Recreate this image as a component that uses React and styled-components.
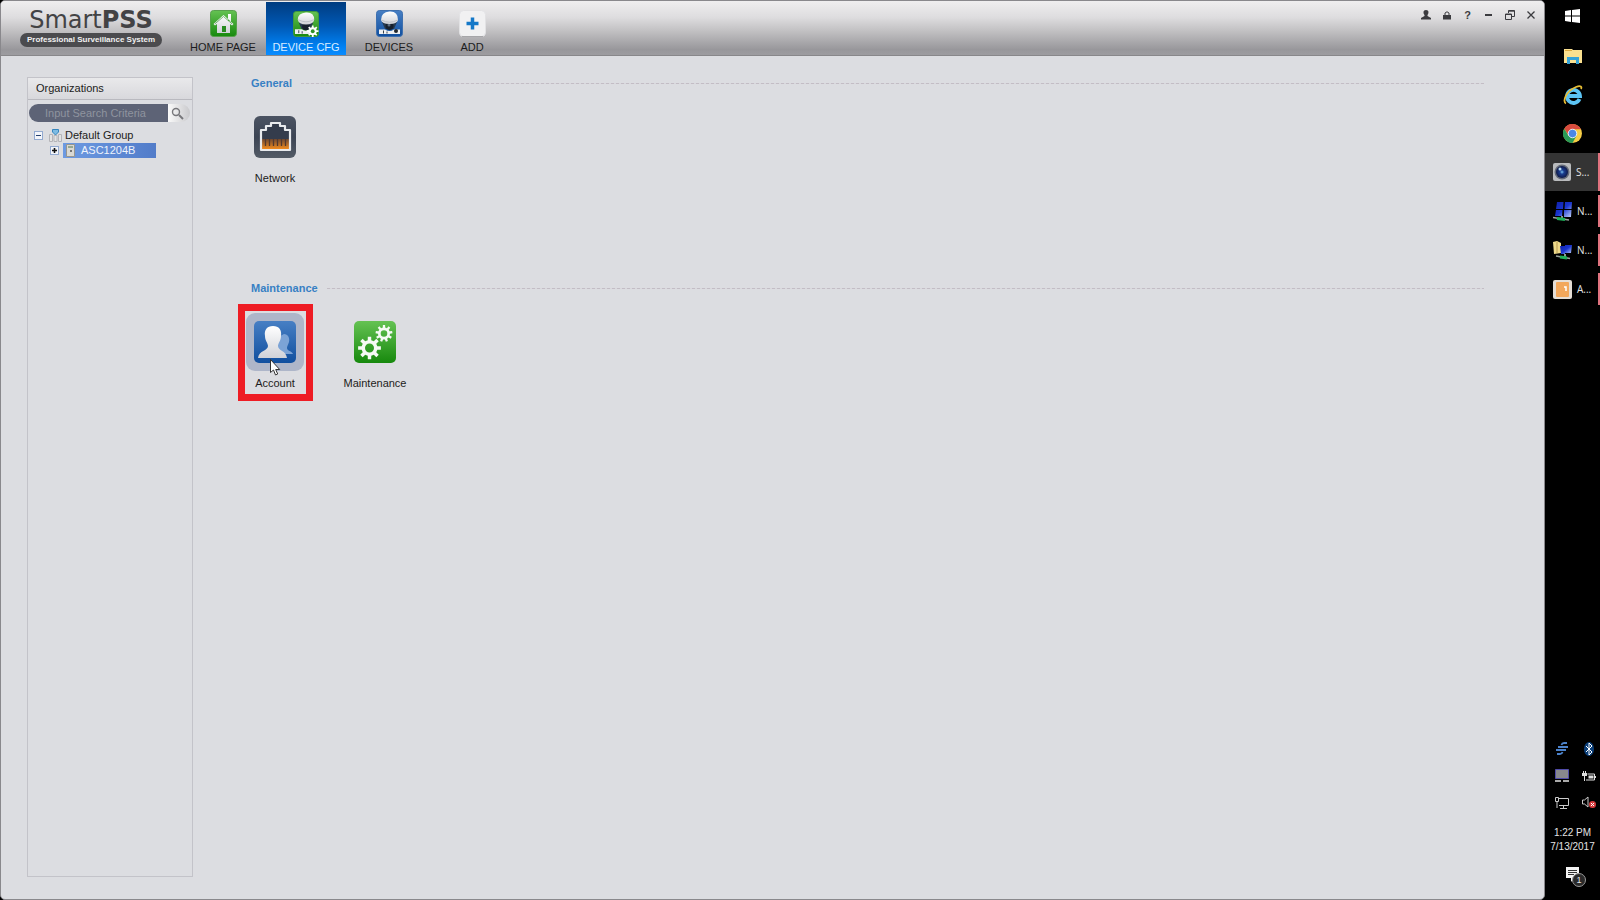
import React, { useState } from "react";
import styled, { createGlobalStyle, css } from "styled-components";

const GlobalStyle = createGlobalStyle`
  * {
    box-sizing: border-box;
  }
  body {
    margin: 0;
    background: #000;
    color: #1c1c20;
    font-family: "Liberation Sans", Arial, sans-serif;
    font-size: 11px;
  }
  button, input {
    margin: 0;
    padding: 0;
    border: none;
    background: none;
    color: inherit;
    font: inherit;
  }
  svg {
    display: block;
    flex: none;
  }
`;

const Desktop = styled.div`
  display: grid;
  grid-template-columns: minmax(0, 1fr) 55px;
  min-height: 100vh;
`;
const Window = styled.div`
  display: flex;
  flex-direction: column;
  border: 1px solid #89888c;
  border-radius: 5px;
  background: #dcdde1;
  overflow: hidden;
`;

const Header = styled.header`
  display: flex;
  height: 55px;
  padding-left: 19px;
  border-bottom: 1px solid #88878a;
  background: linear-gradient(#efeeef, #dedddf 30%, #c2c1c3 55%, #98979b 90%, #9d9ca0);
`;
const Brand = styled.div`
  display: flex;
  flex-direction: column;
  align-items: center;
  width: 142px;
  padding-top: 6px;
`;
const Logo = styled.div`
  color: #434345;
  font-family: "DejaVu Sans", Verdana, sans-serif;
  font-size: 24px;
  line-height: 26px;
`;
const Slogan = styled.div`
  width: 142px;
  border-radius: 7px;
  background: #4b4b4e;
  color: #f2f2f2;
  font-size: 8px;
  font-weight: bold;
  line-height: 14px;
  text-align: center;
  white-space: nowrap;
`;
const Tabs = styled.nav`
  display: flex;
  align-items: flex-end;
  gap: 3px;
  margin-left: 21px;
`;
const Tab = styled.button`
  display: flex;
  flex-direction: column;
  align-items: center;
  justify-content: flex-end;
  gap: 2px;
  width: 80px;
  height: 53px;
  white-space: nowrap;
  line-height: 16px;
  cursor: pointer;
  ${(props) =>
    props.$active &&
    css`
      background: linear-gradient(#003c80, #0058b4 45%, #0082f4 85%, #0a8cff);
      color: #d9ecff;
    `}
`;
const WindowButtons = styled.div`
  display: flex;
  gap: 2px;
  height: 28px;
  margin-left: auto;
  padding-right: 4px;
`;
const WindowButton = styled.button`
  display: flex;
  align-items: center;
  justify-content: center;
  width: 19px;
  color: #3b3b3f;
  font-weight: bold;
`;

const Body = styled.div`
  display: flex;
  flex: 1;
  padding: 19px 60px 22px 26px;
`;
const Sidebar = styled.aside`
  display: flex;
  flex-direction: column;
  width: 166px;
  margin-top: 2px;
  border: 1px solid #c3c3c9;
`;
const SidebarTitle = styled.h2`
  margin: 0;
  padding-left: 8px;
  border-bottom: 1px solid #b9b9bf;
  background: linear-gradient(#e9e9eb, #d8d8dc);
  font-size: 11px;
  font-weight: normal;
  line-height: 21px;
`;
const Search = styled.form`
  display: flex;
  height: 18px;
  margin: 4px 2px 6px 1px;
  border-radius: 9px;
  overflow: hidden;
`;
const SearchInput = styled.input`
  flex: 1;
  min-width: 0;
  padding-left: 16px;
  background: #5d6376;
  color: #fff;
  outline: none;
  &::placeholder {
    color: #8f949f;
    opacity: 1;
  }
`;
const SearchButton = styled.button`
  display: flex;
  align-items: center;
  width: 22px;
  padding-left: 3px;
  background: linear-gradient(90deg, #fafafa, #c9c9cc);
`;
const Tree = styled.ul`
  margin: 0;
  padding: 0;
  list-style: none;
`;
const TreeRow = styled.li`
  display: flex;
  align-items: center;
  gap: 4px;
  height: 15px;
  padding-left: ${(props) => (props.$child ? "22px" : "6px")};
`;
const Toggle = styled.button`
  display: flex;
  width: 9px;
  height: 9px;
  border: 1px solid #93aad0;
  background: #f3f5fa;
`;
const TreeItem = styled.button`
  display: flex;
  align-items: center;
  gap: 3px;
  height: 15px;
  padding-left: 2px;
  line-height: 15px;
  white-space: nowrap;
  ${(props) =>
    props.$selected &&
    css`
      gap: 6px;
      width: 93px;
      padding-left: 3px;
      background: linear-gradient(90deg, #6d9ae2, #527cc9);
      color: #eef3fc;
    `}
`;

const Main = styled.main`
  flex: 1;
  padding-left: 44px;
`;
const Section = styled.section`
  height: 205px;
`;
const SectionHead = styled.div`
  display: flex;
  align-items: center;
  gap: 9px;
  height: 16px;
  margin-bottom: 9px;
  padding-left: 14px;
`;
const SectionTitle = styled.h3`
  margin: 0;
  color: #3780c4;
  font-size: 11px;
  line-height: 16px;
`;
const Rule = styled.div`
  flex: 1;
  height: 1px;
  background: repeating-linear-gradient(90deg, #c3bdc5 0 3px, #d8d7dc 3px 5px);
`;
const Items = styled.div`
  display: flex;
  gap: 24px;
`;
const Item = styled.button`
  position: relative;
  display: flex;
  flex-direction: column;
  align-items: center;
  gap: 4px;
  width: 76px;
  height: 96px;
  padding-top: 8px;
  line-height: 16px;
`;
const ItemIcon = styled.span`
  padding: 8px;
  border-radius: 9px;
  background: ${(props) => (props.$hovered ? "#aeb6c9" : "none")};
`;
const Highlight = styled.span`
  position: absolute;
  inset: -1px 0 0 1px;
  border: 7px solid #ee1c24;
`;
const Pointer = styled.svg`
  position: absolute;
  top: 54px;
  left: 33px;
`;

const Taskbar = styled.aside`
  display: flex;
  flex-direction: column;
  padding-bottom: 10px;
  background: #000;
  color: #e4e4e4;
`;
const Launcher = styled.button`
  display: flex;
  align-items: center;
  justify-content: center;
  height: 39px;
  &:first-child {
    height: 36px;
    padding-bottom: 4px;
  }
`;
const Task = styled.button`
  display: flex;
  align-items: center;
  gap: 5px;
  height: 32px;
  margin: 3px 0 4px;
  padding-left: 8px;
  border-right: 2px solid #e0737f;
  font-family: "Open Sans", sans-serif;
  font-size: 10px;
  ${(props) =>
    props.$active &&
    css`
      height: 38px;
      margin: 0 0 1px;
      background: #343434;
    `}
`;
const Tray = styled.div`
  display: grid;
  grid-template-columns: 27px 27px;
  grid-auto-rows: 27px;
  margin-top: auto;
  padding-left: 3px;
`;
const TrayButton = styled.button`
  display: flex;
  align-items: center;
  justify-content: center;
`;
const Clock = styled.time`
  margin: 10px 0 13px;
  font-size: 10px;
  line-height: 14px;
  text-align: center;
`;
const Notifications = styled.button`
  position: relative;
  display: flex;
  align-self: center;
  height: 23px;
`;
const Badge = styled.span`
  position: absolute;
  left: 6px;
  top: 6px;
  width: 14px;
  height: 14px;
  border: 1px solid #999;
  border-radius: 50%;
  background: #2a2a2a;
  font-size: 9px;
  line-height: 12px;
`;

// outline of a cog with square teeth
const cog = (cx, cy, outer, inner, teeth) => {
  const step = (Math.PI * 2) / teeth;
  let d = "";
  for (let i = 0; i < teeth; i++) {
    [
      [inner, -0.28],
      [outer, -0.19],
      [outer, 0.19],
      [inner, 0.28],
    ].forEach(([r, shift]) => {
      const a = (i + shift) * step;
      d += `${d ? "L" : "M"}${cx + r * Math.sin(a)} ${cy - r * Math.cos(a)}`;
    });
  }
  return d + "Z";
};

const Defs = styled.svg`
  position: absolute;
`;
const Gradients = () => (
  <Defs width="0" height="0" aria-hidden="true">
    <defs>
      <linearGradient id="green" x2="0" y2="1">
        <stop offset="0" stopColor="#65c253" />
        <stop offset="1" stopColor="#17890d" />
      </linearGradient>
      <linearGradient id="blue" x2="0" y2="1">
        <stop offset="0" stopColor="#477fc4" />
        <stop offset="1" stopColor="#104f9f" />
      </linearGradient>
      <linearGradient id="slate" x2="0" y2="1">
        <stop offset="0" stopColor="#4b5362" />
        <stop offset="0.5" stopColor="#3c4454" />
        <stop offset="1" stopColor="#535b66" />
      </linearGradient>
      <linearGradient id="white" x2="0" y2="1">
        <stop offset="0" stopColor="#fff" />
        <stop offset="1" stopColor="#d0d2d8" />
      </linearGradient>
      <linearGradient id="copper" x2="0" y2="1">
        <stop offset="0" stopColor="#70482f" />
        <stop offset="1" stopColor="#f18b1e" />
      </linearGradient>
      <linearGradient id="screen" x2="1" y2="1">
        <stop offset="0" stopColor="#1020a8" />
        <stop offset="0.5" stopColor="#1a36d0" />
        <stop offset="1" stopColor="#c4d6fa" />
      </linearGradient>
      <radialGradient id="lens">
        <stop offset="0" stopColor="#7dc4ef" />
        <stop offset="0.35" stopColor="#1b3f91" />
        <stop offset="1" stopColor="#101a48" />
      </radialGradient>
    </defs>
  </Defs>
);

const HomeIcon = () => (
  <svg width="27" height="27" viewBox="0 0 27 27">
    <rect x="0.5" y="0.5" width="26" height="26" rx="3" fill="url(#green)" stroke="#58a04d" />
    <path d="M18 4h3v7h-3zM13.500 5L3.500 14l1.500 1.500L7 14v9h13v-9l2 1.500 1.500-1.500z" fill="url(#white)" />
    <path d="M5 13.800L13.500 6.500l8.500 7.300" fill="none" stroke="#459c3c" strokeWidth="0.700" />
    <path d="M12 16h4v6h-4z" fill="#288b20" />
  </svg>
);

const DevicesIcon = () => (
  <svg width="27" height="27" viewBox="0 0 27 27">
    <rect x="0.500" y="0.500" width="26" height="26" rx="3" fill="url(#blue)" stroke="#3d6fae" />
    <path d="M6 12h15l-3 7H9z" fill="#263a50" />
    <circle cx="13.500" cy="16" r="4" fill="#16202d" />
    <circle cx="13" cy="15" r="1.500" fill="#5d6d7f" />
    <path d="M5 10Q5 2 13.500 1.500T22 10Q21 14 13.500 14T5 10z" fill="url(#white)" />
    <path d="M5.500 10q8 4.500 16 0" fill="none" stroke="#b4b9c0" strokeWidth="0.800" />
    <path d="M3 19.500h6q4.500 3 9 0h6V24H3z" fill="#eef0f2" />
    <path d="M7.500 20.500v3M11 21.500v2" stroke="#36434d" />
    <circle cx="20" cy="21" r="2" fill="#22272c" />
  </svg>
);

const DeviceConfigIcon = () => (
  <svg width="26" height="26" viewBox="0 0 27 27">
    <rect x="0.500" y="0.500" width="26" height="26" rx="3" fill="url(#green)" stroke="#429a39" />
    <path d="M6 12h15l-3 7H9z" fill="#263a50" />
    <circle cx="13.500" cy="16" r="4" fill="#16202d" />
    <path d="M5 9Q5 2 13.500 1.500T22 9Q21 14 13.500 14T5 9z" fill="url(#white)" />
    <path d="M5.500 9q8 4.500 16 0" fill="none" stroke="#b4b9c0" strokeWidth="0.800" />
    <path d="M2 19h7q4 3 8 0v5H2z" fill="#eef0f2" />
    <path d="M6 20v3M9.500 21v2.500" stroke="#36434d" />
    <path d={cog(20.500, 21, 6, 4.200, 8)} fill="#fff" />
    <circle cx="20.500" cy="21" r="2" fill="#309128" />
  </svg>
);

const AddIcon = () => (
  <svg width="27" height="27" viewBox="0 0 27 27">
    <rect x="0.500" y="0.500" width="26" height="26" rx="4" fill="#f1f1f2" stroke="#e2e2e4" />
    <path d="M3 26.500h21" stroke="#a6a6a9" />
    <path d="M13.500 7.500v12M7.500 13.500h12" stroke="#1478c8" strokeWidth="3.500" />
  </svg>
);

const NetworkIcon = () => (
  <svg width="42" height="42" viewBox="0 0 42 42">
    <rect width="42" height="42" rx="6" fill="url(#slate)" />
    <path d="M7 34V14h4v-4h5V7h10v3h5v4h5v20z" fill="#343c4c" />
    <path d="M8 23h27v10H8z" fill="url(#copper)" />
    <path d="M11.500 23v7M15.500 23v7M19.500 23v7M23.500 23v7M27.500 23v7M31.500 23v7" stroke="#51392f" strokeWidth="1.300" />
    <path d="M7 34V14h5v-4h5V7h9v3h5v4h5v20z" fill="none" stroke="#e8eaed" strokeWidth="2.200" strokeLinejoin="round" />
  </svg>
);

const AccountIcon = () => (
  <svg width="42" height="42" viewBox="0 0 42 42">
    <rect width="42" height="42" rx="5" fill="url(#blue)" />
    <path d="M30 13c4 0 6 4 5 8-1 3-2 4-2 6 0 3 5 3 6 6H24V16z" fill="#7ba3d6" />
    <path d="M19 5c6 0 9 4 8 10 0 5-3 7-3 10 0 5 8 4 9 12H4c1-8 10-7 10-12 0-3-3-5-3-10-1-6 2-10 8-10z" fill="url(#white)" />
  </svg>
);

const MaintenanceIcon = () => (
  <svg width="42" height="42" viewBox="0 0 42 42">
    <rect width="42" height="42" rx="5" fill="url(#green)" />
    <g fillRule="evenodd" fill="#f6faf5">
      <path d={cog(15.5, 27, 11.500, 8, 8) + "M11 27a4.500 4.500 0 1 0 9 0a4.500 4.500 0 1 0-9 0"} />
      <path d={cog(30, 12.500, 8.500, 6, 9) + "M26.700 12.500a3.300 3.300 0 1 0 6.600 0a3.300 3.300 0 1 0-6.600 0"} />
    </g>
  </svg>
);

const MouseArrow = () => (
  <Pointer width="11" height="17" viewBox="0 0 11 17" aria-hidden="true">
    <path d="M0.500 0.500v13l3-2.500 2 5 2.200-1-2-4.500h4z" fill="#fff" stroke="#333" />
  </Pointer>
);

const WindowsIcon = () => (
  <svg width="15" height="14" viewBox="0 0 15 14">
    <path d="M0 2l6-1v5.500H0zM7 1l8-1v6.500H7zM0 7.500h6V13l-6-1zM7 7.500h8V14l-8-1z" fill="#fff" />
  </svg>
);

const FolderIcon = () => (
  <svg width="18" height="16" viewBox="0 0 18 16">
    <path d="M0 1h8l1 1h9v13H0z" fill="#fae08f" />
    <path d="M1 2.500h7" stroke="#dba83f" />
    <path d="M3 9h12v7h-3v-4H6v4H3z" fill="#35a3d8" />
  </svg>
);

const ExplorerIcon = () => (
  <svg width="20" height="20" viewBox="0 0 20 20">
    <path d="M16.500 14A6.500 6.500 0 1 1 17 11H6" fill="none" stroke="#5cc4f4" strokeWidth="3.800" />
    <path d="M3 18.500C-1 17 3 6 13 2c5-2 6 0 5 2" fill="none" stroke="#e7bd35" strokeWidth="1.800" />
  </svg>
);

const ChromeIcon = () => (
  <svg width="19" height="19" viewBox="0 0 20 20">
    <circle cx="10" cy="10" r="10" fill="#f6cd46" />
    <path d="M10 5.500h8.900A10 10 0 0 0 1.300 5L6 12z" fill="#d84b3e" />
    <path d="M1.300 5A10 10 0 0 0 10 20l4-7.500-8 0z" fill="#299a57" />
    <circle cx="10" cy="10" r="4.500" fill="#4b87e7" stroke="#eef3fb" />
  </svg>
);

const LensIcon = () => (
  <svg width="18" height="19" viewBox="0 0 18 19">
    <rect width="18" height="18" rx="2" fill="#b9bbbd" />
    <circle cx="9" cy="9" r="7.500" fill="#646b78" />
    <circle cx="9" cy="9" r="6" fill="url(#lens)" />
    <circle cx="7" cy="6" r="1.500" fill="#b9dcf2" />
  </svg>
);

const ServersIcon = () => (
  <svg width="19" height="20" viewBox="0 0 19 20">
    <path d="M4 1h6.500l-.500 7H3zM12 1h7l-.500 7h-7zM3 9h6.500L9 15H2zM11 9h7.500l-.500 7h-7z" fill="url(#screen)" />
    <path d="M9 15v3" stroke="#8d9a92" strokeWidth="2" />
    <path d="M0 16.500l16 2.500" stroke="#9aa39d" strokeWidth="1.500" />
    <path d="M4 17.500l8 1" stroke="#1fae58" strokeWidth="3" />
  </svg>
);

const SharedIcon = () => (
  <svg width="19" height="20" viewBox="0 0 19 20">
    <path d="M0 2l4-1 4 2v10l-7 1z" fill="#eed98a" />
    <path d="M4 2v11" stroke="#b99b50" />
    <path d="M7 6h5v8H8zM12 5h7l-1 8h-6z" fill="url(#screen)" />
    <path d="M12 14v3" stroke="#8d9a92" strokeWidth="2" />
    <path d="M3 16l14 2.500" stroke="#9aa39d" strokeWidth="1.500" />
    <path d="M7 17l7 1" stroke="#1fae58" strokeWidth="3" />
  </svg>
);

const DoorIcon = () => (
  <svg width="19" height="19" viewBox="0 0 19 19">
    <rect width="19" height="19" rx="2" fill="#e4ddd5" />
    <rect x="3" y="2" width="13" height="15" rx="1" fill="#f2a75b" />
    <path d="M11 7h2v4" fill="none" stroke="#fff" strokeWidth="1.500" />
  </svg>
);

const trayIcons = [
  {
    label: "Sync",
    icon: (
      <svg width="14" height="13" viewBox="0 0 14 13" fill="none" stroke="#4c82ca" strokeWidth="1.800">
        <path d="M12 1H9Q7 1 6.500 3M3 5h10M1 8h10M7.500 10Q7 12 5 12H2" />
      </svg>
    ),
  },
  {
    label: "Bluetooth",
    icon: (
      <svg width="10" height="14" viewBox="0 0 10 14">
        <ellipse cx="5" cy="7" rx="5" ry="7" fill="#0b3f79" />
        <path d="M2 4l6 6-3 3V1l3 3-6 6" fill="none" stroke="#fff" />
      </svg>
    ),
  },
  {
    label: "Touchpad",
    icon: (
      <svg width="14" height="13" viewBox="0 0 14 13">
        <path d="M.500.500h13v9H.500z" fill="#88888c" stroke="#504ba8" />
        <path d="M0 11h6v2H0zM8 11h6v2H8z" fill="#aaa" />
      </svg>
    ),
  },
  {
    label: "Battery",
    icon: (
      <svg width="14" height="10" viewBox="0 0 14 10">
        <path d="M5.500 3h7v6H4M13.500 5v2" fill="none" stroke="#ddd" />
        <path d="M6.500 4.500h5v3h-5zM0 2h5v3H3v5H2V5H0zM1 0h1v2H1zM3 0h1v2H3z" fill="#ddd" />
      </svg>
    ),
  },
  {
    label: "Ethernet",
    icon: (
      <svg width="14" height="12" viewBox="0 0 14 12" fill="none" stroke="#ccc">
        <path d="M4 1.500h9.500v7H4M5 11.500h7M8.500 9v2M.500.500h3v4h-3zM2 5v6" />
      </svg>
    ),
  },
  {
    label: "Volume",
    icon: (
      <svg width="14" height="13" viewBox="0 0 14 13">
        <path d="M.500 4h2L6 1v10L2.500 8h-2z" fill="none" stroke="#ccc" />
        <circle cx="10.500" cy="8.500" r="3.500" fill="#d63a3c" />
        <path d="M9 7l3 3M12 7l-3 3" stroke="#fff" />
      </svg>
    ),
  },
];

const windowIcons = [
  {
    label: "User",
    icon: (
      <svg width="10" height="10" viewBox="0 0 10 10" fill="currentColor">
        <path d="M5 0c3 0 3 3 1.500 5v1L10 8v1.500H0V8l3.500-2V5C2 3 2 0 5 0z" />
      </svg>
    ),
  },
  {
    label: "Lock",
    icon: (
      <svg width="8" height="9" viewBox="0 0 8 9">
        <path d="M2 4V2Q4-.500 6 2v2" fill="none" stroke="currentColor" />
        <path d="M0 4h8v4.500H0z" fill="currentColor" />
      </svg>
    ),
  },
  { label: "Help", icon: "?" },
  {
    label: "Minimize",
    icon: (
      <svg width="7" height="2">
        <path d="M0 1h7" stroke="currentColor" strokeWidth="2" />
      </svg>
    ),
  },
  {
    label: "Restore",
    icon: (
      <svg width="10" height="10" viewBox="0 0 10 10" fill="none" stroke="currentColor">
        <path d="M.500 4h6v5.500h-6zM.500 4.500h6M3.500 3V.500h6v6H7M3.500 1.200h6" />
      </svg>
    ),
  },
  {
    label: "Close",
    icon: (
      <svg width="8" height="8" viewBox="0 0 8 8">
        <path d="M.500.500l7 7M7.500.500l-7 7" stroke="currentColor" strokeWidth="1.300" />
      </svg>
    ),
  },
];

const tabs = [
  { name: "HOME PAGE", icon: <HomeIcon /> },
  { name: "DEVICE CFG", icon: <DeviceConfigIcon /> },
  { name: "DEVICES", icon: <DevicesIcon /> },
  { name: "ADD", icon: <AddIcon /> },
];

const launchers = [
  { label: "Start", icon: <WindowsIcon /> },
  { label: "File Explorer", icon: <FolderIcon /> },
  { label: "Internet Explorer", icon: <ExplorerIcon /> },
  { label: "Chrome", icon: <ChromeIcon /> },
];

const tasks = [
  { text: "S...", icon: <LensIcon />, active: true },
  { text: "N...", icon: <ServersIcon /> },
  { text: "N...", icon: <SharedIcon /> },
  { text: "A...", icon: <DoorIcon /> },
];

const App = () => {
  const [tab, setTab] = useState("DEVICE CFG");
  const [search, setSearch] = useState("");

  return (
    <Desktop>
      <GlobalStyle />
      <Window>
        <Gradients />
        <Header>
          <Brand>
            <Logo>
              Smart<b>PSS</b>
            </Logo>
            <Slogan>Professional Surveillance System</Slogan>
          </Brand>
          <Tabs>
            {tabs.map(({ name, icon }) => (
              <Tab key={name} $active={name === tab} onClick={() => setTab(name)}>
                {icon}
                {name}
              </Tab>
            ))}
          </Tabs>
          <WindowButtons>
            {windowIcons.map(({ label, icon }) => (
              <WindowButton key={label} aria-label={label}>
                {icon}
              </WindowButton>
            ))}
          </WindowButtons>
        </Header>

        <Body>
          <Sidebar>
            <SidebarTitle>Organizations</SidebarTitle>
            <Search onSubmit={(e) => e.preventDefault()}>
              <SearchInput
                type="text"
                aria-label="Search organizations"
                placeholder="Input Search Criteria"
                value={search}
                onChange={(e) => setSearch(e.target.value)}
              />
              <SearchButton aria-label="Search">
                <svg width="13" height="13" viewBox="0 0 13 13" fill="none" stroke="#77777b">
                  <circle cx="5" cy="5" r="3.500" strokeWidth="1.400" />
                  <path d="M8 8l4 4" strokeWidth="2" />
                </svg>
              </SearchButton>
            </Search>
            <Tree>
              <TreeRow>
                <Toggle aria-label="Collapse">
                  <svg width="7" height="7">
                    <path d="M1 3.500h5" stroke="#25406f" />
                  </svg>
                </Toggle>
                <TreeItem>
                  <svg width="13" height="13" viewBox="0 0 13 13">
                    <path d="M.500 5.500h3v7h-3zM5 6.500h3v6H5zM9.500 5.500h3v7h-3z" fill="#e3e3e3" stroke="#b4b4b8" />
                    <path d="M3.500.500h6V3L6.500 6 3.500 3z" fill="#7dbbe3" stroke="#3585bd" />
                  </svg>
                  Default Group
                </TreeItem>
              </TreeRow>
              <TreeRow $child>
                <Toggle aria-label="Expand">
                  <svg width="7" height="7">
                    <path d="M1 3.500h5M3.500 1v5" stroke="#111" strokeWidth="1.600" />
                  </svg>
                </Toggle>
                <TreeItem $selected>
                  <svg width="9" height="13" viewBox="0 0 9 13">
                    <path d="M.500.500h8v12h-8z" fill="#dbd9d3" stroke="#97968f" />
                    <path d="M2 3h5" stroke="#507950" />
                    <path d="M4 6h2v2H4z" fill="#747474" />
                  </svg>
                  ASC1204B
                </TreeItem>
              </TreeRow>
            </Tree>
          </Sidebar>

          <Main>
            <Section>
              <SectionHead>
                <SectionTitle>General</SectionTitle>
                <Rule />
              </SectionHead>
              <Items>
                <Item>
                  <ItemIcon>
                    <NetworkIcon />
                  </ItemIcon>
                  Network
                </Item>
              </Items>
            </Section>
            <Section>
              <SectionHead>
                <SectionTitle>Maintenance</SectionTitle>
                <Rule />
              </SectionHead>
              <Items>
                <Item>
                  <ItemIcon $hovered>
                    <AccountIcon />
                  </ItemIcon>
                  Account
                  <Highlight />
                  <MouseArrow />
                </Item>
                <Item>
                  <ItemIcon>
                    <MaintenanceIcon />
                  </ItemIcon>
                  Maintenance
                </Item>
              </Items>
            </Section>
          </Main>
        </Body>
      </Window>

      <Taskbar>
        {launchers.map(({ label, icon }) => (
          <Launcher key={label} aria-label={label}>
            {icon}
          </Launcher>
        ))}
        {tasks.map(({ text, icon, active }, i) => (
          <Task key={i} $active={active}>
            {icon}
            {text}
          </Task>
        ))}
        <Tray>
          {trayIcons.map(({ label, icon }) => (
            <TrayButton key={label} aria-label={label}>
              {icon}
            </TrayButton>
          ))}
        </Tray>
        <Clock>
          1:22 PM
          <br />
          7/13/2017
        </Clock>
        <Notifications aria-label="Notifications">
          <svg width="13" height="15" viewBox="0 0 13 15">
            <path d="M0 0h13v11H8l-3 4v-4H0z" fill="#f4f4f4" />
            <path d="M2 3.500h9M2 5.500h9M2 7.500h6" stroke="#333" />
          </svg>
          <Badge>1</Badge>
        </Notifications>
      </Taskbar>
    </Desktop>
  );
};

export default App;
